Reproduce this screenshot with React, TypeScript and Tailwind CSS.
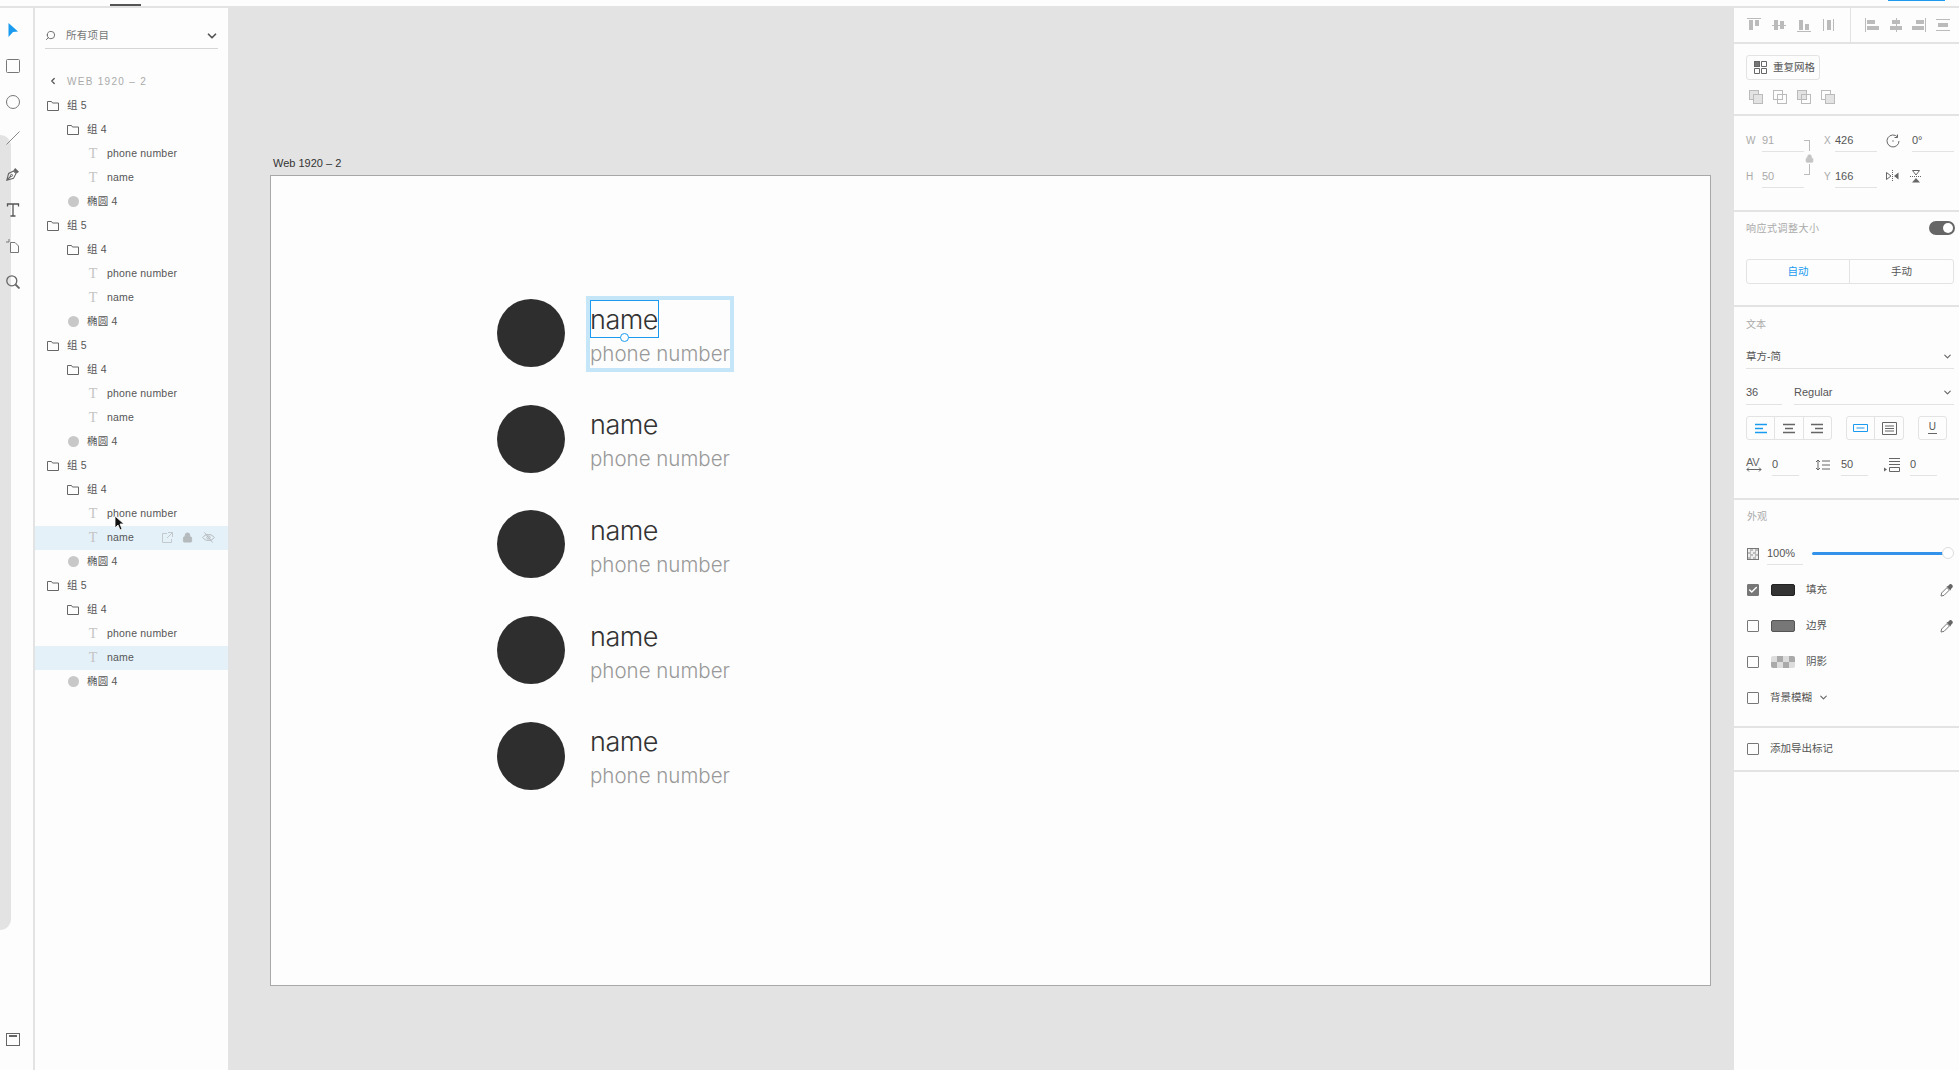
import { Check, ChevronDown, ChevronLeft, Lock, Search } from 'lucide-react'
import type { ReactNode } from 'react'

type Layer = { kind: 'group' | 'sub' | 'text' | 'ellipse'; label: string; bg?: string; hover?: boolean }

const group = (first: Partial<Layer> = {}, second: Partial<Layer> = {}): Layer[] => [
    { kind: 'group', label: '组 5' },
    { kind: 'sub', label: '组 4' },
    { kind: 'text', label: 'phone number', ...first },
    { kind: 'text', label: 'name', ...second },
    { kind: 'ellipse', label: '椭圆 4' },
]

const layers: Layer[] = [
    ...group(),
    ...group(),
    ...group(),
    ...group({}, { hover: true }),
    ...group({}, { bg: 'sel' }),
]

function Ic({ w = 14, h = 14, children }: { w?: number; h?: number; children: ReactNode }) {
    return (
        <svg width={w} height={h} viewBox={`0 0 ${w} ${h}`} fill="none" className="shrink-0">
            {children}
        </svg>
    )
}

function Folder() {
    return (
        <Ic w={12} h={10}>
            <path d="M.5.5h4l1 1.5h6v7.5H.5z" stroke="#666" />
        </Ic>
    )
}

function TGlyph() {
    return <span className="w-[8px] text-[14px] leading-none text-[#c4c4c4] font-['Liberation_Serif',serif] text-center flex justify-center">T</span>
}

function LayerRow({ layer }: { layer: Layer }) {
    const highlighted = layer.hover || layer.bg === 'sel'
    const pad = layer.kind === 'group' ? 'pl-[12px] gap-[8px]' : layer.kind === 'text' ? 'pl-[54px] gap-[10px]' : layer.kind === 'sub' ? 'pl-[32px] gap-[8px]' : 'pl-[33px] gap-[8px]'
    return (
        <div className={`h-[24px] flex items-center text-[10.5px] text-[#555] ${pad} ${highlighted ? 'bg-[#e5f1f9]' : ''}`}>
            {layer.kind === 'group' || layer.kind === 'sub' ? <Folder /> : null}
            {layer.kind === 'text' ? <TGlyph /> : null}
            {layer.kind === 'ellipse' ? <span className="w-[11px] h-[11px] rounded-full bg-[#c8c8c8]" /> : null}
            <span className="tracking-[0.2px]">{layer.label}</span>
            {layer.hover ? (
                <span className="ml-auto flex items-center gap-[9px] pr-[13px]">
                    <Ic w={11} h={11}>
                        <path d="M5 1.5H.5v9h9V7M6 .5h4.5V5M10.5.5 5 6" stroke="#c2c8cc" />
                    </Ic>
                    <Lock size={11} color="#b5babd" fill="#b5babd" />
                    <Ic w={13} h={11}>
                        <path d="M.7 5.5C3.5 1.5 9.5 1.5 12.3 5.5 9.5 9.5 3.5 9.5.7 5.5ZM2.5.5l8 10" stroke="#b5babd" />
                        <circle cx="6.5" cy="5.5" r="1.6" stroke="#b5babd" />
                    </Ic>
                </span>
            ) : null}
        </div>
    )
}

const toolIcons: ReactNode[] = [
    <Ic key="a"><path d="M2.500 0l9.500 8.500-5 .5-4.500 5z" fill="#1a9bef" /></Ic>,
    <Ic key="b"><rect x=".5" y=".5" width="13" height="13" rx="1" stroke="#777" /></Ic>,
    <Ic key="c"><circle cx="7" cy="7" r="6.500" stroke="#777" /></Ic>,
    <Ic key="d"><path d="M.5 13.500 13.500.5" stroke="#888" /></Ic>,
    <Ic key="e">
        <path d="M.8 13.200 2.600 6.500 7.600 4 10 6.400 7.500 11.400zM.8 13.200 5 9" stroke="#666" strokeWidth="1.100" />
        <circle cx="5.600" cy="8.400" r="1" stroke="#666" />
        <path d="M7.500 3.200 9.200 1l3.800 3.800-2.200 1.700z" fill="#666" />
    </Ic>,
    <Ic key="f"><path d="M1.500 3.500V1h11v2.500M7 1v12M4.500 13h5" stroke="#555" strokeWidth="1.300" /></Ic>,
    <Ic key="g"><path d="M4.500 3.500H9l3.500 3.500v6.500h-8zM0 3h3M3 0v3" stroke="#777" /></Ic>,
    <Ic key="h"><circle cx="5.800" cy="5.800" r="5" stroke="#666" strokeWidth="1.300" /><path d="M9.500 9.500 13.500 13.500" stroke="#666" strokeWidth="1.800" /></Ic>,
]

function Rail() {
    return (
        <div className="relative w-[33px] bg-[#fdfdfd] flex flex-col items-start justify-between pt-[4px] pb-[23px]">
            <div className="absolute left-0 top-[127px] bottom-[140px] w-[11px] bg-[#e3e3e3] rounded-r-[11px]" />
            <div className="relative flex flex-col">
                {toolIcons.map((icon, i) => (
                    <div key={i} className="h-[36px] flex items-center justify-center w-[26px]">
                        {icon}
                    </div>
                ))}
            </div>
            <div className="ml-[6px]">
                <Ic>
                    <rect x=".5" y=".5" width="13" height="12" stroke="#666" />
                    <path d="M3 3h8" stroke="#666" strokeWidth="2" />
                </Ic>
            </div>
        </div>
    )
}

function LayerPanel() {
    return (
        <div className="relative w-[193px] bg-[#fdfdfd] border-l-2 border-[#e3e3e3] box-content">
            <div className="mx-[10px] mt-[15px] h-[26px] flex items-center border-b border-[#d5d5d5]">
                <Search size={11} color="#666" className="-scale-x-100" />
                <span className="ml-[10px] text-[10.5px] text-[#777] tracking-[0.3px]">所有项目</span>
                <ChevronDown size={14} color="#555" strokeWidth={3} className="ml-auto -mr-[1px]" />
            </div>
            <div className="h-[32px] mt-[16px] -mb-[3.500px] flex items-center pl-[13px] text-[10px] text-[#aaa] tracking-[1.300px]">
                <ChevronLeft size={10} color="#555" strokeWidth={3} />
                <span className="ml-[9px]">WEB 1920 – 2</span>
            </div>
            {layers.map((l, i) => (
                <LayerRow key={i} layer={l} />
            ))}
            {/* pointer over the fourth group */}
            <svg width="11" height="17" viewBox="0 0 11 17" className="absolute left-[79px] top-[507px]">
                <path d="M1 1v12l3-3 2 5 2-1-2-5h4z" fill="#111" stroke="#fff" strokeWidth=".8" />
            </svg>
        </div>
    )
}

function Contact() {
    return (
        <div className="h-[68px] flex items-center gap-[25px]">
            <div className="w-[68px] h-[68px] rounded-full bg-[#2e2e2e]" />
            <div className="flex flex-col mt-[6px] font-['Inter',sans-serif] font-light">
                <span className="h-[34px] leading-[34px] text-[27px] text-[#333] tracking-[-0.5px]">name</span>
                <span className="h-[33px] leading-[33px] text-[20.500px] text-[#999]">phone number</span>
            </div>
        </div>
    )
}

function Canvas() {
    return (
        <div className="flex-1 bg-[#e3e3e3] pl-[42px] pr-[19px] pt-[148px]">
            <div className="h-[19px] pl-[3px] text-[11px] leading-[14px] text-[#333] font-['Liberation_Sans',sans-serif]">Web 1920 – 2</div>
            <div className="relative h-[811px] bg-[#fdfdfd] border border-[#a8a8a8] pl-[226px] pt-[123px]">
                <div className="flex flex-col gap-[37.700px]">
                    {[0, 1, 2, 3, 4].map((i) => (
                        <Contact key={i} />
                    ))}
                </div>
                {/* selection of the first text group */}
                <div className="absolute left-[315px] top-[120px] w-[148px] h-[76px] border-4 border-[#c5e6f9]" />
                <div className="absolute left-[319px] top-[124px] w-[69px] h-[38px] border border-[#1a9bef]" />
                <div className="absolute left-[349px] top-[157px] w-[9px] h-[9px] rounded-full border border-[#1a9bef] bg-white" />
            </div>
        </div>
    )
}

function Bar({ w = 14, h = 14, rects }: { w?: number; h?: number; rects?: number[][] }) {
    return (
        <Ic w={w} h={h}>
            {rects?.map((r, i) => <rect key={i} x={r[0]} y={r[1]} width={r[2]} height={r[3]} fill="#bbb" />)}
        </Ic>
    )
}

function Field({ value, className, dim }: { value: string; className: string; dim?: boolean }) {
    return (
        <div className={`h-[23px] flex items-center border-b border-[#e3e3e3] text-[11px] ${dim ? 'text-[#aaa]' : 'text-[#555]'} ${className}`}>
            {value}
        </div>
    )
}

function Label({ children, className = '' }: { children: ReactNode; className?: string }) {
    return <span className={`text-[10px] text-[#aaa] ${className}`}>{children}</span>
}

function Overlap({ mode }: { mode: number }) {
    return (
        <Ic>
            <rect x=".5" y=".5" width="9" height="9" stroke="#bbb" fill={mode === 0 || mode === 2 ? '#e3e3e3' : 'none'} />
            <rect x="4.500" y="4.500" width="9" height="9" stroke="#bbb" fill={mode === 0 || mode === 3 ? '#e3e3e3' : 'none'} />
        </Ic>
    )
}

function AlignLines({ color, kind }: { color: string; kind: 'left' | 'center' | 'right' }) {
    const x = kind === 'left' ? 0 : kind === 'center' ? 2 : 4
    return (
        <Ic w={12} h={11}>
            <path d={`M0 1.500h12M${x} 5.500h8M0 9.500h12`} stroke={color} strokeWidth="1.300" />
        </Ic>
    )
}

function Dropper() {
    return (
        <Ic w={14} h={14}>
            <path d="M1 13l.6-3L7 4.600 9.400 7 4 12.400z" stroke="#777" fill="#fff" />
            <path d="M6.500 3.500 8 3l1.500-1.500c1.400-1.600 4.400 1.300 2.900 2.900L11 6l-.5 1.500z" fill="#666" />
        </Ic>
    )
}

function Box({ checked }: { checked?: boolean }) {
    return (
        <span className={`w-[12px] h-[12px] shrink-0 flex items-center justify-center border border-[#777] rounded-[1px] ${checked ? 'bg-[#777]' : ''}`}>
            {checked ? <Check size={10} color="#fff" strokeWidth={3.500} /> : null}
        </span>
    )
}

function Inspector() {
    return (
        <div className="w-[229px] bg-[#fdfdfd] border-l-4 border-[#e3e3e3] text-[#555]">
            <div className="h-[36px] flex border-b-2 border-[#e3e3e3]">
                <div className="w-[117px] flex items-center pl-[13px] gap-[11px] border-r border-[#e3e3e3]">
                    <Bar rects={[[0, 0, 14, 1], [2, 2, 4, 10], [8, 2, 4, 6]]} />
                    <Bar rects={[[0, 7, 14, 1], [2, 2, 4, 10], [8, 3, 4, 8]]} />
                    <Bar rects={[[0, 13, 14, 1], [2, 2, 4, 10], [8, 6, 4, 6]]} />
                    <Bar rects={[[1, 1, 1, 12], [5, 2, 4, 10], [11, 1, 1, 12]]} />
                </div>
                <div className="flex-1 flex items-center pl-[14px] gap-[9.500px]">
                    <Bar rects={[[0, 0, 1, 14], [2, 2, 8, 4], [2, 8, 12, 4]]} />
                    <Bar rects={[[7, 0, 1, 14], [3, 2, 8, 4], [1, 8, 12, 4]]} />
                    <Bar rects={[[13, 0, 1, 14], [4, 2, 8, 4], [0, 8, 12, 4]]} />
                    <Bar rects={[[0, 1, 14, 1], [2, 5, 10, 4], [0, 12, 14, 1]]} />
                </div>
            </div>

            <div className="h-[72px] border-b-2 border-[#e3e3e3] px-[12px] pt-[11px]">
                <div className="w-[74px] h-[25px] flex items-center gap-[6px] pl-[7px] border border-[#e3e3e3] rounded-[3px] text-[10.500px]">
                    <Ic w={13} h={13}>
                        <rect x=".5" y=".5" width="5" height="5" fill="#777" stroke="#666" />
                        <path d="M7.500.5h5v5h-5zM.5 7.500h5v5h-5zM7.500 7.500h5v5h-5z" stroke="#666" />
                    </Ic>
                    重复网格
                </div>
                <div className="mt-[10px] flex gap-[10px] pl-[3px]">
                    {[0, 1, 2, 3].map((m) => (
                        <Overlap key={m} mode={m} />
                    ))}
                </div>
            </div>

            <div className="relative h-[96px] border-b-2 border-[#e3e3e3] pt-[13px]">
                <div className="flex items-center pl-[12px] text-[10px]">
                    <Label className="w-[16px]">W</Label>
                    <Field dim value="91" className="w-[42px]" />
                    <Label className="ml-[20px] w-[11px]">X</Label>
                    <Field value="426" className="w-[42px]" />
                    <span className="ml-[9px] w-[26px]">
                        <Ic>
                            <path d="M11.500 3A6 6 0 1 0 13 7M11.500.5V3.500H8.500" stroke="#666" />
                            <circle cx="7" cy="7" r=".7" fill="#666" />
                        </Ic>
                    </span>
                    <Field value="0°" className="w-[42px]" />
                </div>
                <div className="flex items-center pl-[12px] mt-[13px]">
                    <Label className="w-[16px]">H</Label>
                    <Field dim value="50" className="w-[42px]" />
                    <Label className="ml-[20px] w-[11px]">Y</Label>
                    <Field value="166" className="w-[42px]" />
                    <span className="ml-[9px] flex gap-[11px]">
                        <Ic w={13} h={12}>
                            <path d="M.5 2.500 5 6 .5 9.500z" stroke="#666" />
                            <path d="M12.500 2.500 8 6l4.500 3.500z" fill="#666" />
                            <path d="M6.500 0v12" stroke="#666" strokeDasharray="1 1" />
                        </Ic>
                        <Ic w={12} h={13}>
                            <path d="M2.500.5 9.500.5 6 5z" stroke="#666" />
                            <path d="M2 12.500 10 12.500 6 8z" fill="#666" />
                            <path d="M0 6.500h12" stroke="#666" strokeDasharray="1 1" />
                        </Ic>
                    </span>
                </div>
                {/* aspect ratio lock */}
                <div className="absolute left-[70px] top-[24px] w-[6px] h-[11px] border-t border-r border-[#bbb]" />
                <div className="absolute left-[70px] top-[48px] w-[6px] h-[11px] border-b border-r border-[#bbb]" />
                <Lock size={9} color="#c4c4c4" fill="#c4c4c4" className="absolute left-[71px] top-[38px]" />
            </div>

            <div className="h-[95px] border-b-2 border-[#e3e3e3] px-[12px] pt-[9px]">
                <div className="flex items-center justify-between h-[14px]">
                    <Label className="tracking-[0.5px]">响应式调整大小</Label>
                    <span className="relative w-[26px] h-[14px] -mr-[8px] rounded-full bg-[#666]">
                        <span className="absolute right-[2px] top-[2px] w-[10px] h-[10px] rounded-full bg-white" />
                    </span>
                </div>
                <div className="mt-[24px] w-[208px] h-[25px] grid grid-cols-2 border border-[#e3e3e3] rounded-[3px] text-[10.500px]">
                    <span className="flex items-center justify-center text-[#1a9bef] border-r border-[#e3e3e3]">自动</span>
                    <span className="flex items-center justify-center">手动</span>
                </div>
            </div>

            <div className="h-[193px] border-b-2 border-[#e3e3e3] px-[12px] pt-[11px] text-[10.500px]">
                <Label className="block leading-[14px]">文本</Label>
                <div className="mt-[13px] w-[208px] h-[24px] flex items-center justify-between border-b border-[#e3e3e3]">
                    草方-简
                    <ChevronDown size={11} color="#666" strokeWidth={2.500} className="mr-[1px]" />
                </div>
                <div className="mt-[12px] w-[208px] flex gap-[12px]">
                    <div className="w-[36px] h-[24px] border-b border-[#e3e3e3] flex items-center text-[11px]">36</div>
                    <div className="flex-1 h-[24px] border-b border-[#e3e3e3] flex items-center justify-between text-[11px]">
                        Regular
                        <ChevronDown size={11} color="#666" strokeWidth={2.500} className="mr-[1px]" />
                    </div>
                </div>
                <div className="mt-[11px] flex items-center">
                    <div className="flex h-[24px] w-[88px] border border-[#e3e3e3] rounded-[3px]">
                        <span className="flex-1 flex items-center justify-center border-r border-[#e3e3e3]"><AlignLines color="#1a9bef" kind="left" /></span>
                        <span className="flex-1 flex items-center justify-center border-r border-[#e3e3e3]"><AlignLines color="#666" kind="center" /></span>
                        <span className="flex-1 flex items-center justify-center"><AlignLines color="#666" kind="right" /></span>
                    </div>
                    <div className="ml-[14px] flex h-[24px] w-[59px] border border-[#e3e3e3] rounded-[3px]">
                        <span className="flex-1 flex items-center justify-center border-r border-[#e3e3e3]">
                            <Ic w={15} h={8}>
                                <path d="M.5.500h14v7H.5zM3.500 4h8" stroke="#1a9bef" />
                            </Ic>
                        </span>
                        <span className="flex-1 flex items-center justify-center">
                            <Ic w={15} h={13}>
                                <path d="M.5.500h14v12H.5zM3 4h9M3 6.500h9M3 9h9" stroke="#666" />
                            </Ic>
                        </span>
                    </div>
                    <div className="ml-[14px] w-[30px] h-[24px] flex flex-col items-center justify-center border border-[#e3e3e3] rounded-[3px] text-[10px] leading-[10px]">
                        <span className="border-b border-[#666] px-[1px] pb-[1px]">U</span>
                    </div>
                </div>
                <div className="mt-[13px] flex items-center h-[23px]">
                    <span className="w-[26px] flex flex-col text-[11px] leading-[9px] -tracking-[0.2px] text-[#666]">
                        AV
                        <Ic w={16} h={5}>
                            <path d="M1 2.500h14M3 .5 1 2.500l2 2M13 .5l2 2-2 2" stroke="#666" />
                        </Ic>
                    </span>
                    <Field value="0" className="w-[27px]" />
                    <span className="ml-[16px] w-[26px]">
                        <Ic w={16} h={12}>
                            <path d="M3 1v10M1 3l2-2 2 2M1 9l2 2 2-2M7 2h8M7 6h8M7 10h8" stroke="#666" />
                        </Ic>
                    </span>
                    <Field value="50" className="w-[27px]" />
                    <span className="ml-[16px] w-[26px]">
                        <Ic w={17} h={14}>
                            <path d="M5 .5h11M5 3.500h11M5 6.500h11M5.500 9.500h10v4h-10z" stroke="#666" />
                            <path d="M0 9.500l3 2-3 2z" fill="#666" />
                        </Ic>
                    </span>
                    <Field value="0" className="w-[27px]" />
                </div>
            </div>

            <div className="h-[228px] border-b-2 border-[#e3e3e3] px-[13px] pt-[10px] text-[10.500px]">
                <Label className="block leading-[14px]">外观</Label>
                <div className="mt-[18px] flex items-center h-[23px]">
                    <span className="w-[12px] h-[12px] border border-[#777] bg-[conic-gradient(#bbb_25%,#eee_0_50%,#bbb_0_75%,#eee_0)] bg-[length:5px_5px]" />
                    <Field value="100%" className="ml-[8px] w-[36px]" />
                    <div className="relative ml-[9px] w-[133px] h-[3px] bg-[#3393ea] rounded-full">
                        <span className="absolute -right-[9px] -top-[5px] w-[12px] h-[12px] rounded-full bg-white border border-[#ddd]" />
                    </div>
                </div>
                <div className="flex flex-col">
                    {[
                        { label: '填充', on: true, swatch: 'bg-[#333] border-[#222]' },
                        { label: '边界', swatch: 'bg-[#777] border-[#555]' },
                    ].map((r) => (
                        <div key={r.label} className="mt-[13px] h-[23px] flex items-center">
                            <Box checked={r.on} />
                            <span className={`ml-[12px] w-[24px] h-[12px] rounded-[2px] border ${r.swatch}`} />
                            <span className="ml-[11px]">{r.label}</span>
                            <span className="ml-auto -mr-[8px]"><Dropper /></span>
                        </div>
                    ))}
                    <div className="mt-[13px] h-[23px] flex items-center">
                        <Box />
                        <span className="ml-[12px] w-[24px] h-[12px] rounded-[2px] bg-[conic-gradient(#aaa_25%,#ddd_0_50%,#aaa_0_75%,#ddd_0)] bg-[length:12px_12px]" />
                        <span className="ml-[11px]">阴影</span>
                    </div>
                    <div className="mt-[13px] h-[23px] flex items-center">
                        <Box />
                        <span className="ml-[11px]">背景模糊</span>
                        <ChevronDown size={11} color="#666" strokeWidth={2.500} className="ml-[6px]" />
                    </div>
                </div>
            </div>

            <div className="h-[44px] border-b-2 border-[#e3e3e3] px-[13px] flex items-center text-[10.500px]">
                <Box />
                <span className="ml-[11px]">添加导出标记</span>
            </div>
        </div>
    )
}

export default function App() {
    return (
        <div className="h-screen flex flex-col overflow-hidden bg-[#fdfdfd] font-['Liberation_Sans','Noto_Sans_CJK_SC',sans-serif]">
            <div className="relative h-[8px] shrink-0 border-b-2 border-[#e3e3e3]">
                <div className="absolute left-[110px] top-[4px] w-[31px] h-[2px] bg-[#555]" />
                <div className="absolute left-[1888px] top-0 w-[57px] h-[1px] bg-[#1a9bef]" />
            </div>
            <div className="flex-1 flex min-h-0">
                <Rail />
                <LayerPanel />
                <Canvas />
                <Inspector />
            </div>
        </div>
    )
}
